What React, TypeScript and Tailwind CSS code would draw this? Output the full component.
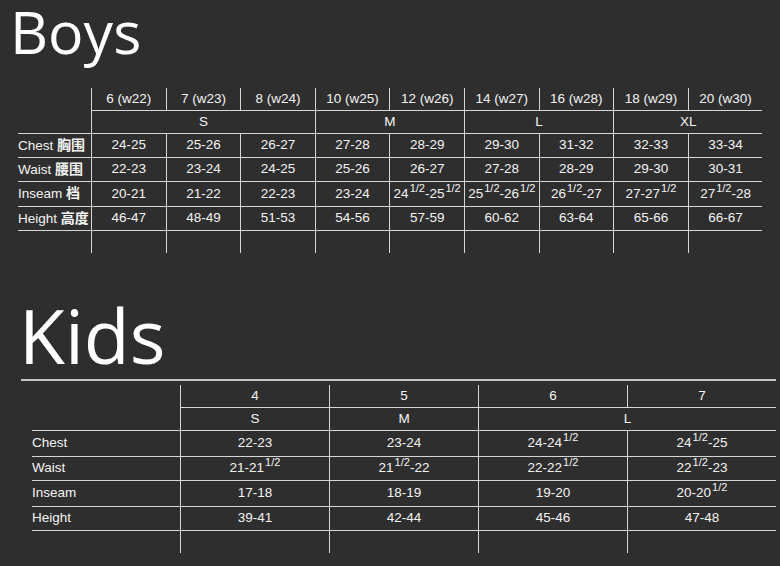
import type { ReactNode } from "react";

const font = { fontFamily: '"Liberation Sans", Arial, "Noto Sans CJK SC", sans-serif' };

type CellProps = {
  children?: ReactNode;
  l?: boolean;
  b?: boolean;
  span?: 2 | 3;
  left?: boolean;
};

function Cell({ children, l, b, span, left }: CellProps) {
  return (
    <div
      className={[
        "flex items-center whitespace-nowrap",
        left ? "justify-start" : "justify-center",
        l ? "border-l border-[#d6d6d6]" : "",
        b ? "border-b border-[#d6d6d6]" : "",
        span === 2 ? "col-span-2" : span === 3 ? "col-span-3" : "",
      ].join(" ")}
    >
      <span>{children}</span>
    </div>
  );
}

function H({ n }: { n: string }) {
  // value with a 1/2 superscript
  return <sup className="text-[11px] -top-[6px] ml-[1px]">{n}</sup>;
}

const half = <H n="1/2" />;

const boysHead = ["6 (w22)", "7 (w23)", "8 (w24)", "10 (w25)", "12 (w26)", "14 (w27)", "16 (w28)", "18 (w29)", "20 (w30)"];

const boysRows: { label: ReactNode; vals: ReactNode[] }[] = [
  {
    label: <>Chest <span className="font-bold text-[14px]">胸围</span></>,
    vals: ["24-25", "25-26", "26-27", "27-28", "28-29", "29-30", "31-32", "32-33", "33-34"],
  },
  {
    label: <>Waist <span className="font-bold text-[14px]">腰围</span></>,
    vals: ["22-23", "23-24", "24-25", "25-26", "26-27", "27-28", "28-29", "29-30", "30-31"],
  },
  {
    label: <>Inseam <span className="font-bold text-[14px]">档</span></>,
    vals: [
      "20-21",
      "21-22",
      "22-23",
      "23-24",
      <>24{half}-25{half}</>,
      <>25{half}-26{half}</>,
      <>26{half}-27</>,
      <>27-27{half}</>,
      <>27{half}-28</>,
    ],
  },
  {
    label: <>Height <span className="font-bold text-[14px]">高度</span></>,
    vals: ["46-47", "48-49", "51-53", "54-56", "57-59", "60-62", "63-64", "65-66", "66-67"],
  },
];

const kidsRows: { label: string; vals: ReactNode[] }[] = [
  { label: "Chest", vals: ["22-23", "23-24", <>24-24{half}</>, <>24{half}-25</>] },
  { label: "Waist", vals: [<>21-21{half}</>, <>21{half}-22</>, <>22-22{half}</>, <>22{half}-23</>] },
  { label: "Inseam", vals: ["17-18", "18-19", "19-20", <>20-20{half}</>] },
  { label: "Height", vals: ["39-41", "42-44", "45-46", "47-48"] },
];

const titleFont = { fontFamily: '"Open Sans", "Noto Sans", sans-serif' };

export default function App() {
  return (
    <div className="w-[780px] h-[566px] overflow-hidden bg-[#2f2e2e] text-[#f4f4f4]" style={font}>
      <div className="pl-[10px] h-[63px] text-[59px] leading-[63px] text-white" style={titleFont}>
        Boys
      </div>

      <div className="mt-[25px] ml-[18px] grid grid-cols-[73px_repeat(9,74.6px)] grid-rows-[23px_23px_24px_24px_25px_24px_22px] text-[13.5px]">
        <Cell />
        {boysHead.map((h) => (
          <Cell key={h} l b>
            {h}
          </Cell>
        ))}

        <Cell b />
        <Cell l b span={3}>S</Cell>
        <Cell l b span={2}>M</Cell>
        <Cell l b span={2}>L</Cell>
        <Cell l b span={2}>XL</Cell>

        {boysRows.map((r, i) => (
          <div key={i} className="contents">
            <Cell b left>
              {r.label}
            </Cell>
            {r.vals.map((v, j) => (
              <Cell key={j} l b>
                {v}
              </Cell>
            ))}
          </div>
        ))}

        <Cell />
        {boysHead.map((h) => (
          <Cell key={h} l />
        ))}
      </div>

      <div className="mt-[44px] pl-[19px] h-[77px] text-[75px] leading-[77px] text-white" style={titleFont}>
        Kids
      </div>
      <div className="mt-[5px] ml-[21px] w-[755px] h-[2px] bg-[#c4c4c4]" />

      <div className="mt-[4px] ml-[32px] grid grid-cols-[148px_repeat(4,149px)] grid-rows-[23px_23px_26px_24px_26px_24px_22px] text-[13.5px]">
        <Cell />
        {["4", "5", "6", "7"].map((h) => (
          <Cell key={h} l b>
            {h}
          </Cell>
        ))}

        <Cell b />
        <Cell l b>S</Cell>
        <Cell l b>M</Cell>
        <Cell l b span={2}>L</Cell>

        {kidsRows.map((r) => (
          <div key={r.label} className="contents">
            <Cell b left>
              {r.label}
            </Cell>
            {r.vals.map((v, j) => (
              <Cell key={j} l b>
                {v}
              </Cell>
            ))}
          </div>
        ))}

        <Cell />
        {["4", "5", "6", "7"].map((h) => (
          <Cell key={h} l />
        ))}
      </div>
    </div>
  );
}
